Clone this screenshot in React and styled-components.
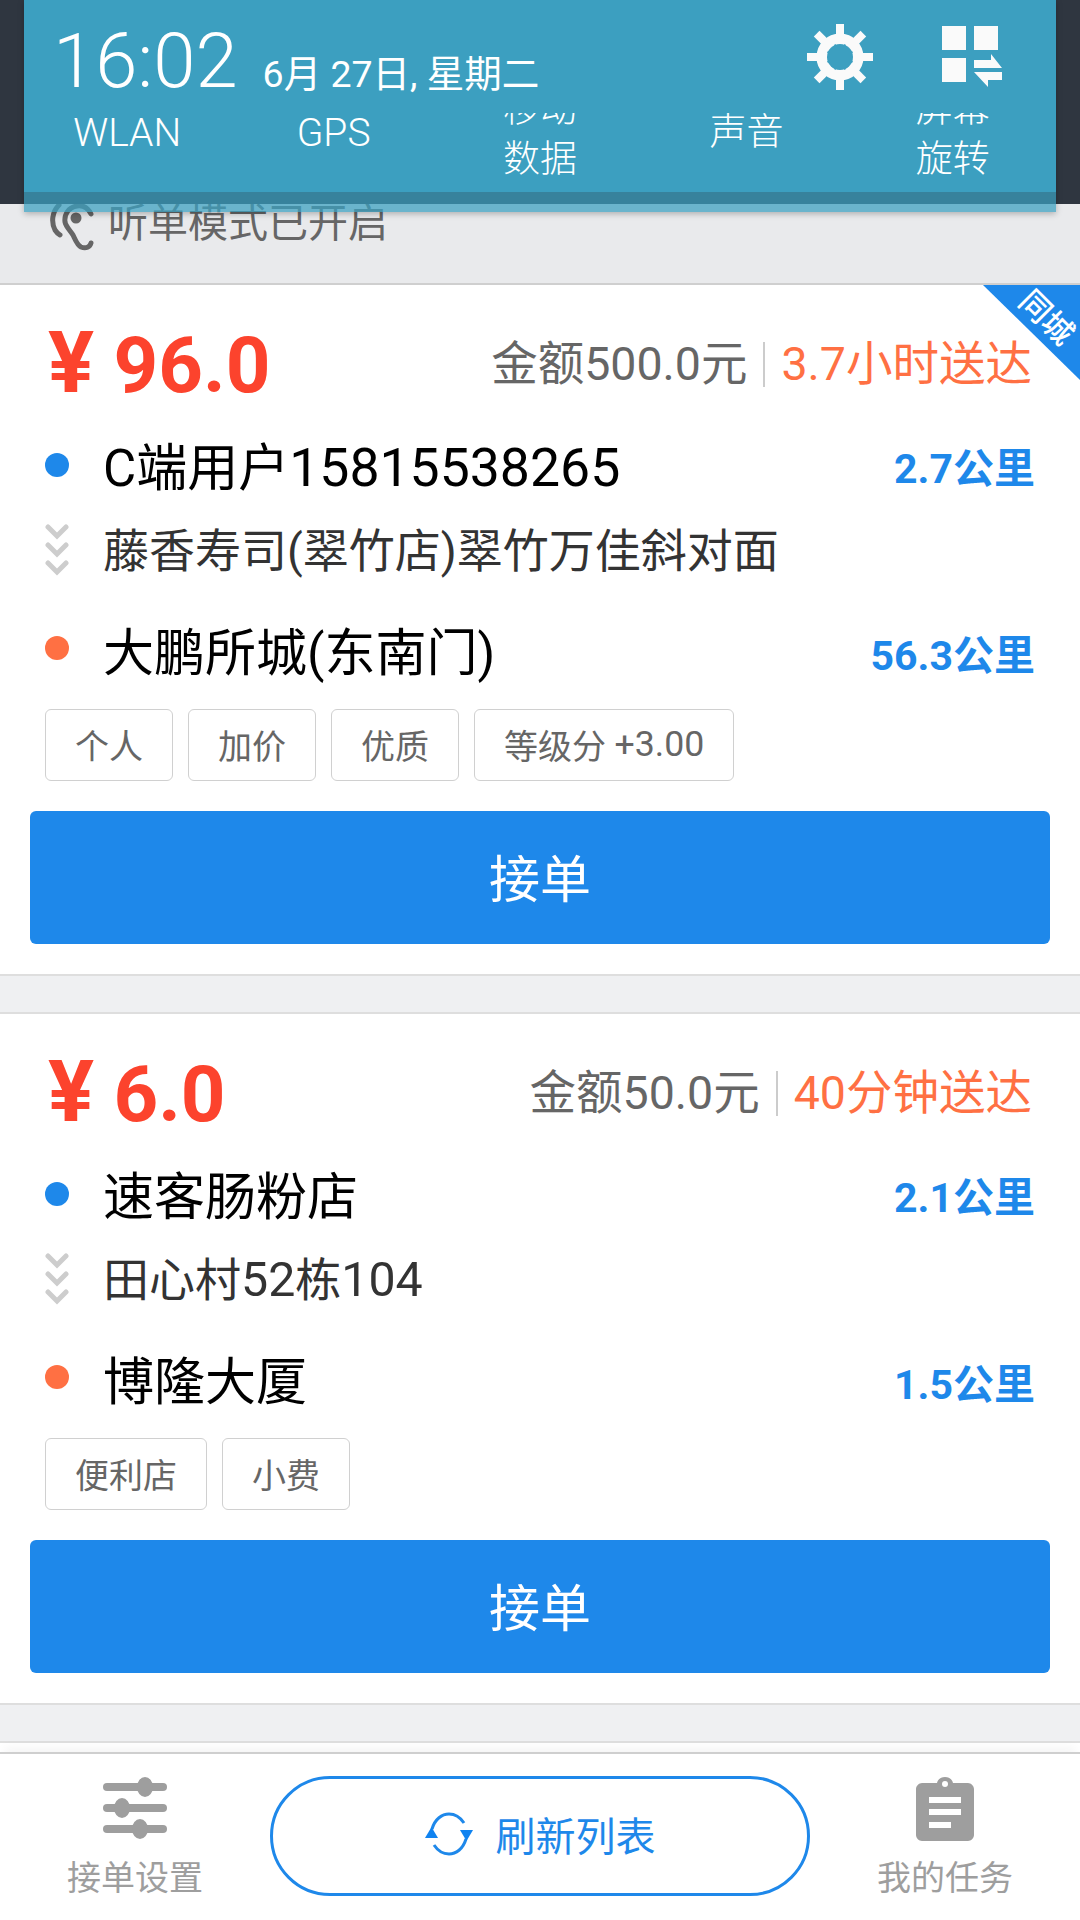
import React from 'react'
import styled, { createGlobalStyle } from 'styled-components'

const FONT = `Roboto, "Noto Sans CJK SC", sans-serif`

const GlobalStyle = createGlobalStyle`
  html, body { margin: 0; padding: 0; background: #fff; }
  * { box-sizing: border-box; }
`

const orders = [
  {
    price: '96.0', amount: '金额500.0元', eta: '3.7小时送达', ribbon: '同城',
    pickup: 'C端用户15815538265', pickupKm: '2.7公里',
    address: '藤香寿司(翠竹店)翠竹万佳斜对面',
    dest: '大鹏所城(东南门)', destKm: '56.3公里',
    tags: ['个人', '加价', '优质', '等级分 +3.00'],
  },
  {
    price: '6.0', amount: '金额50.0元', eta: '40分钟送达',
    pickup: '速客肠粉店', pickupKm: '2.1公里',
    address: '田心村52栋104',
    dest: '博隆大厦', destKm: '1.5公里',
    tags: ['便利店', '小费'],
  },
]

const quick = [
  { lines: ['WLAN'], latin: true },
  { lines: ['GPS'], latin: true },
  { lines: ['移动', '数据'] },
  { lines: ['声音'] },
  { lines: ['屏幕', '旋转'] },
]

// digits run a little wider than the fallback CJK text around them
const withDigits = (text) =>
  text.split(/([+\d.]+)/).map((part, i) => (i % 2 ? <Digits key={i}>{part}</Digits> : part))

const GearIcon = () => (
  <svg width="66" height="66" viewBox="0 0 66 66">
    <g fill="#fafafa">
      {[0, 45, 90, 135].map((a) => (
        <rect key={a} x="29" y="0" width="8" height="66" transform={`rotate(${a} 33 33)`} />
      ))}
    </g>
    <circle cx="33" cy="33" r="18.5" fill="none" stroke="#fafafa" strokeWidth="10" />
    <circle cx="33" cy="33" r="13" fill="#3c9fc0" />
  </svg>
)

const GridSwapIcon = () => (
  <svg width="60" height="62" viewBox="0 0 60 62">
    <g fill="#fafafa">
      <rect x="0" y="0" width="24" height="24" />
      <rect x="32" y="0" width="24" height="24" />
      <rect x="0" y="32" width="24" height="24" />
      <path d="M32 34h17v-6l11 14H32z" />
      <path d="M32 46h28v8H46v7z" />
    </g>
  </svg>
)

const EarIcon = () => (
  <svg width="46" height="50" viewBox="0 0 46 50" fill="none" stroke="#666" strokeWidth="5" strokeLinecap="round">
    <path d="M9 3C2 10 1 20 5 28c2 3 3 4 5 5" />
    <path d="M41 12C38 6 33 3 27 4 19 5 14 12 15 20c1 5 5 8 8 13 2 4 4 10 8 12 5 2 9 0 10-4" />
    <circle cx="26" cy="16" r="5.5" fill="#666" stroke="none" />
  </svg>
)

const ChevronStack = () => (
  <svg width="24" height="52" viewBox="0 0 24 52" fill="none" stroke="#cdcdcd" strokeWidth="5" strokeLinecap="round">
    <path d="M3 3l9 9 9-9" />
    <path d="M3 21l9 9 9-9" />
    <path d="M3 39l9 9 9-9" />
  </svg>
)

const SlidersIcon = () => (
  <svg width="64" height="62" viewBox="0 0 64 62" fill="#9e9e9e">
    <rect x="0" y="6" width="64" height="8" rx="4" />
    <rect x="0" y="27" width="64" height="8" rx="4" />
    <rect x="0" y="48" width="64" height="8" rx="4" />
    <ellipse cx="42" cy="10" rx="8" ry="10" />
    <ellipse cx="19" cy="31" rx="8" ry="10" />
    <ellipse cx="37" cy="52" rx="8" ry="10" />
  </svg>
)

const ClipboardIcon = () => (
  <svg width="58" height="64" viewBox="0 0 58 64">
    <path fill="#9e9e9e" d="M6 6h15c1-4 4-6 8-6s7 2 8 6h15c3 0 6 3 6 6v46c0 3-3 6-6 6H6c-3 0-6-3-6-6V12c0-3 3-6 6-6z" />
    <circle cx="29" cy="7" r="3" fill="#fff" />
    <rect x="13" y="20" width="32" height="6" fill="#fff" />
    <rect x="13" y="32" width="32" height="6" fill="#fff" />
    <rect x="13" y="45" width="22" height="6" fill="#fff" />
  </svg>
)

const RefreshIcon = () => (
  <svg width="48" height="44" viewBox="0 0 48 44" fill="none">
    <path d="M7 17C10 7 17 2 24 2c6 0 11 3 15 9" stroke="#1e88ea" strokeWidth="3" />
    <path d="M41 27c-3 10-10 15-17 15-6 0-11-3-15-9" stroke="#1e88ea" strokeWidth="3" />
    <path d="M35 18h13l-6.500 11z" fill="#1083f0" />
    <path d="M0 26h13L6.500 15z" fill="#1083f0" />
  </svg>
)

const App = () => (
  <Screen>
    <GlobalStyle />
    <StatusBack />
    <Banner>
      <EarIcon />
      <span>听单模式已开启</span>
    </Banner>
    <List>
      {orders.map((o) => (
        <React.Fragment key={o.price}>
          <Card>
            {o.ribbon && (
              <Ribbon><RibbonText>{o.ribbon}</RibbonText></Ribbon>
            )}
            <PriceRow>
              <Price><Yen>¥</Yen> {o.price}</Price>
              <Meta>
                <Amount>{o.amount}</Amount>
                <MetaDivider />
                <Eta>{o.eta}</Eta>
              </Meta>
            </PriceRow>
            <Row $h={46}>
              <Marker><Dot $color="#1e88ea" $shift={-2} /></Marker>
              <PlaceName $shift={5}>{withDigits(o.pickup)}</PlaceName>
              <Distance $shift={5}>{o.pickupKm}</Distance>
            </Row>
            <Row $h={122}>
              <Marker><ChevronStack /></Marker>
              <Address>{withDigits(o.address)}</Address>
            </Row>
            <Row $h={78}>
              <Marker><Dot $color="#ff7043" $shift={-5} /></Marker>
              <PlaceName $shift={7}>{o.dest}</PlaceName>
              <Distance $shift={12}>{o.destKm}</Distance>
            </Row>
            <Tags>
              {o.tags.map((t) => <Tag key={t}>{withDigits(t)}</Tag>)}
            </Tags>
            <AcceptButton>接单</AcceptButton>
          </Card>
          <Gap />
        </React.Fragment>
      ))}
    </List>
    <BottomBar>
      <BarItem>
        <SlidersIcon />
        <BarLabel $top={21}>接单设置</BarLabel>
      </BarItem>
      <RefreshPill>
        <RefreshIcon />
        <span>刷新列表</span>
      </RefreshPill>
      <BarItem>
        <ClipboardIcon />
        <BarLabel $top={19}>我的任务</BarLabel>
      </BarItem>
    </BottomBar>

    <Shade>
      <ShadeTop>
        <Clock>
          <Time>16:02</Time>
          <DateText>6月 27日, 星期二</DateText>
        </Clock>
        <ShadeIcons>
          <GearIcon />
          <GridSwapIcon />
        </ShadeIcons>
      </ShadeTop>
      <QuickGrid>
        {quick.map((q) => (
          <QuickCell key={q.lines[0]} $clip={q.lines.length > 1}>
            <QuickText $two={q.lines.length > 1} $latin={q.latin}>
              {q.lines.map((l) => <div key={l}>{l}</div>)}
            </QuickText>
          </QuickCell>
        ))}
      </QuickGrid>
      <ShadeEdge />
    </Shade>
  </Screen>
)

export default App

const Screen = styled.div`
  position: relative;
  width: 1080px;
  height: 1920px;
  overflow: hidden;
  display: flex;
  flex-direction: column;
  background: #fff;
  font-family: ${FONT};
`

const StatusBack = styled.div`
  height: 204px;
  flex: none;
  background: #2f3640;
`

const Banner = styled.div`
  height: 81px;
  flex: none;
  display: flex;
  align-items: flex-start;
  gap: 12px;
  padding-left: 50px;
  background: #e9eaec;
  border-bottom: 2px solid #cfcfcf;
  overflow: hidden;
  color: #666;
  font-size: 40px;
  line-height: 40px;
  svg { margin-top: -2px; flex: none; }
`

const List = styled.div`
  flex: 1;
  min-height: 0;
  overflow: hidden;
`

const Card = styled.div`
  position: relative;
  background: #fff;
  height: 689px;
`

const Ribbon = styled.div`
  position: absolute;
  top: 0;
  right: 0;
  width: 97px;
  height: 95px;
  background: #1e88ea;
  clip-path: polygon(0 0, 100% 0, 100% 100%);
`

const RibbonText = styled.div`
  position: absolute;
  top: 15px;
  left: 28px;
  width: 70px;
  text-align: center;
  color: #fff;
  font-size: 31px;
  font-weight: 500;
  line-height: 36px;
  transform: rotate(45deg);
`

const PriceRow = styled.div`
  height: 158px;
  display: flex;
  align-items: center;
  justify-content: space-between;
  padding: 0 48px;
`

const Price = styled.div`
  color: #fc432d;
  font-size: 78px;
  font-weight: 700;
  line-height: 90px;
`

const Yen = styled.span`
  font-size: 86px;
`

const Digits = styled.span`
  font-size: 1.05em;
`

const Meta = styled.div`
  display: flex;
  align-items: center;
  font-size: 46.5px;
  line-height: 56px;
`

const Amount = styled.span`
  color: #666;
`

const MetaDivider = styled.span`
  width: 2px;
  height: 45px;
  margin: 0 16px;
  background: #ccc;
`

const Eta = styled.span`
  color: #ff7043;
`

const Row = styled.div`
  height: ${(p) => p.$h}px;
  display: flex;
  align-items: center;
  padding: 0 45px;
`

const Marker = styled.div`
  width: 58px;
  flex: none;
  display: flex;
  align-items: center;
`

const Dot = styled.span`
  width: 24px;
  height: 24px;
  margin-top: ${(p) => p.$shift}px;
  border-radius: 50%;
  background: ${(p) => p.$color};
`

const PlaceName = styled.div`
  flex: 1;
  margin-top: ${(p) => p.$shift}px;
  color: #000;
  font-size: 51px;
  line-height: 60px;
`

const Address = styled.div`
  margin-top: 2px;
  color: #333;
  font-size: 46px;
  line-height: 56px;
`

const Distance = styled.div`
  margin-top: ${(p) => p.$shift}px;
  color: #1e88ea;
  font-size: 41px;
  font-weight: 700;
  line-height: 50px;
`

const Tags = styled.div`
  display: flex;
  gap: 15px;
  padding: 20px 45px 0;
`

const Tag = styled.div`
  height: 72px;
  padding: 0 29px 2px;
  display: flex;
  align-items: center;
  white-space: pre;
  border: 1.5px solid #d0d0d0;
  border-radius: 6px;
  color: #666;
  font-size: 34px;
`

const AcceptButton = styled.div`
  height: 133px;
  margin: 30px 30px 0;
  padding-bottom: 4px;
  display: flex;
  align-items: center;
  justify-content: center;
  background: #1e88ea;
  border-radius: 6px;
  color: #fff;
  font-size: 51px;
`

const Gap = styled.div`
  height: 40px;
  background: #eff0f2;
  border-top: 2px solid #dedede;
  border-bottom: 2px solid #dedede;
`

const BottomBar = styled.div`
  height: 168px;
  flex: none;
  display: grid;
  grid-template-columns: 270px 540px 270px;
  background: #fff;
  border-top: 2px solid #cfcfcf;
  box-shadow: 0 -9px 9px -4px rgba(0, 0, 0, 0.04);
`

const BarItem = styled.div`
  display: flex;
  flex-direction: column;
  align-items: center;
  padding-top: 23px;
`

const BarLabel = styled.div`
  margin-top: ${(p) => p.$top}px;
  color: #9e9e9e;
  font-size: 34px;
  line-height: 36px;
`

const RefreshPill = styled.div`
  height: 120px;
  margin-top: 22px;
  padding-bottom: 4px;
  display: flex;
  align-items: center;
  justify-content: center;
  gap: 23px;
  border: 3px solid #1e88ea;
  border-radius: 60px;
  color: #1e88ea;
  font-size: 40px;
`

const Shade = styled.div`
  position: absolute;
  top: 0;
  left: 24px;
  width: 1032px;
  height: 212px;
  display: flex;
  flex-direction: column;
  box-shadow: 0 2px 6px rgba(0, 0, 0, 0.25);
  color: #fff;
  overflow: hidden;
`

const ShadeTop = styled.div`
  height: 113px;
  flex: none;
  display: flex;
  justify-content: space-between;
  padding: 0 54px 0 29px;
  background: #3c9fc0;
`

const Clock = styled.div`
  display: flex;
  align-items: baseline;
  gap: 25px;
  padding-top: 16px;
`

const Time = styled.span`
  font-size: 76px;
  font-weight: 300;
  line-height: 90px;
`

const DateText = styled.span`
  font-size: 37.5px;
`

const ShadeIcons = styled.div`
  display: flex;
  gap: 69px;
  padding-top: 24px;
  align-items: flex-start;
  svg:last-child { margin-top: 2px; }
`

const QuickGrid = styled.div`
  height: 79px;
  flex: none;
  display: grid;
  grid-template-columns: repeat(5, 1fr);
  background: #3c9fc0;
`

const QuickCell = styled.div`
  overflow: ${(p) => (p.$clip ? 'hidden' : 'visible')};
  text-align: center;
`

const QuickText = styled.div`
  margin-top: ${(p) => (p.$two ? '-28px' : '-5px')};
  font-size: ${(p) => (p.$latin ? 39 : 37)}px;
  font-weight: 300;
  line-height: 50px;
`

const ShadeEdge = styled.div`
  flex: 1;
  background: rgba(58, 160, 192, 0.726);
`
